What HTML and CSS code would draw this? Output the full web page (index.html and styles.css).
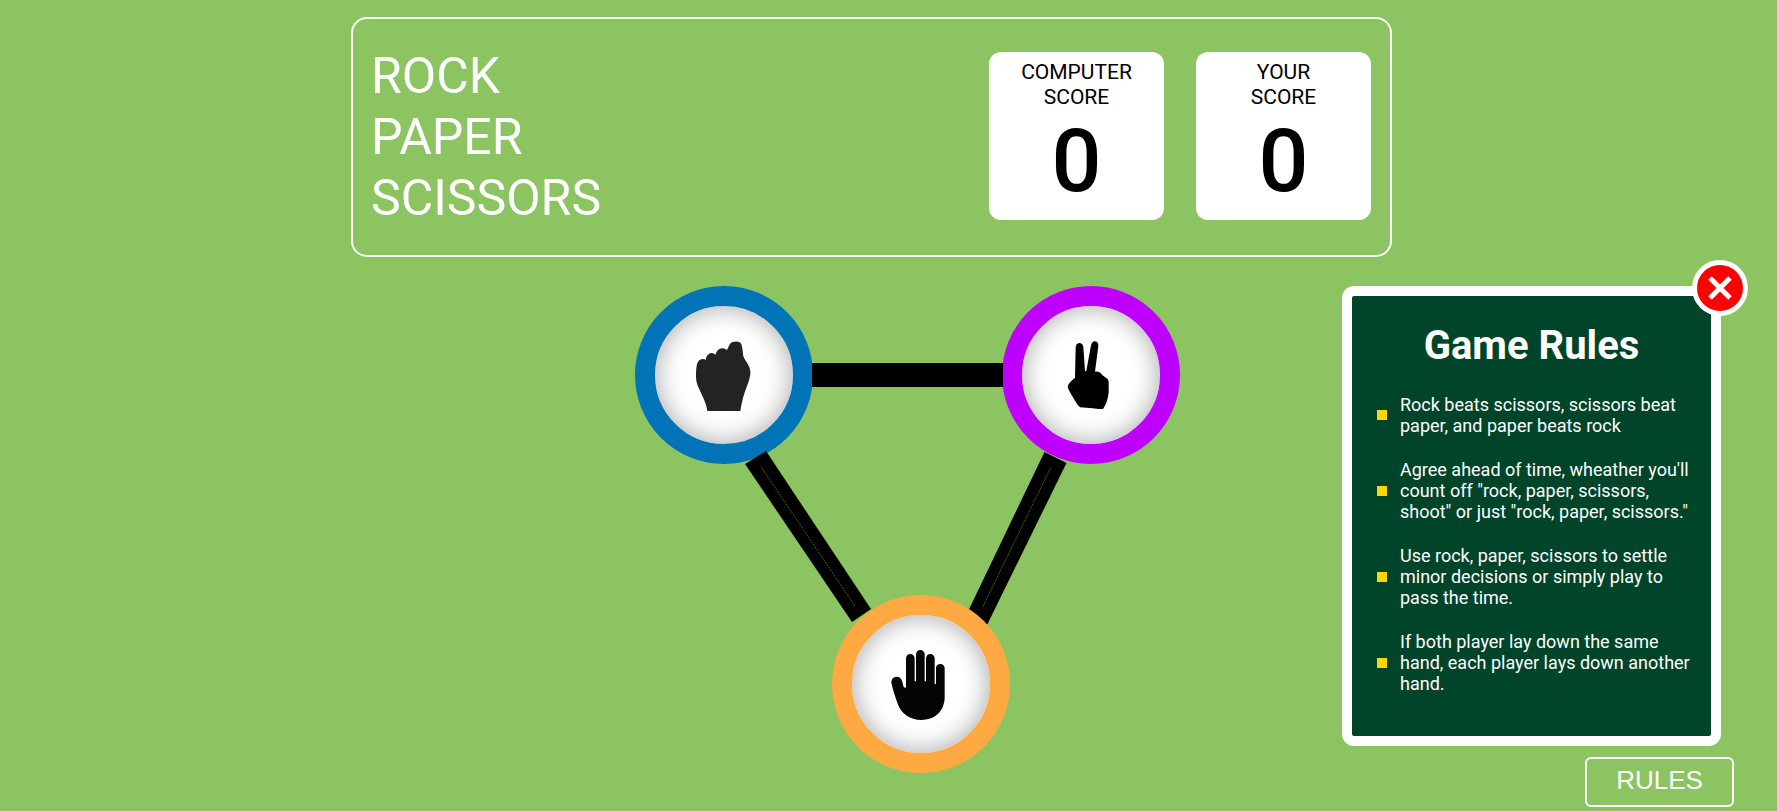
FILE: index.html
```html
<!DOCTYPE html>
<html lang="en">
<head>
<meta charset="utf-8">
<meta name="viewport" content="width=device-width, initial-scale=1">
<title>Rock Paper Scissors</title>
<link rel="stylesheet" href="styles.css">
</head>
<body>
<header class="scoreboard">
  <h1 class="title">ROCK<br>PAPER<br>SCISSORS</h1>
  <div class="scores">
    <section class="score">
      <h2 class="score-label">COMPUTER<br>SCORE</h2>
      <p class="score-value">0</p>
    </section>
    <section class="score">
      <h2 class="score-label">YOUR<br>SCORE</h2>
      <p class="score-value">0</p>
    </section>
  </div>
</header>
<main class="game">
  <div class="arena">
    <button class="hand hand-rock" type="button" aria-label="Rock">
      <svg class="hand-icon" viewBox="12 -3 240 300" aria-hidden="true"><path fill="#242321" d="M82 255C79 232 68 212 58 190C50 174 47 160 48 143C49 125 50 109 58 103Q67 96 77 101Q80 83 94 81Q101 80 106 86Q114 66 127 67Q136 68 141 72C148 58 150 46 164 47Q180 45 184 55C188 66 188 78 190 91C197 110 214 121 211 145C208 168 196 190 190 212C186 228 183 240 181 255Z"/></svg>
    </button>
    <button class="hand hand-scissors" type="button" aria-label="Scissors">
      <svg class="hand-icon" viewBox="3 -3 240 300" aria-hidden="true"><path fill="#000" d="M90 244C80 235 72 218 63 204Q56 193 53 182Q54 174 64 165L75 155L77 64Q78 52 88 51Q97 51 100 62L105 136L109 135L123 58Q126 46 135 46Q146 48 145 60L135 137Q145 136 152 141Q156 149 165 153Q175 158 176 166V200C174 219 168 236 159 249Q140 250 129 247Z"/></svg>
    </button>
    <svg class="links" viewBox="0 0 545 488" aria-hidden="true">
      <rect x="177" y="77" width="191" height="24"/>
      <path d="M110 178L131 165L236 323L217 336Z"/>
      <path d="M409.500 166L431.500 177L352.500 338L326 340Z"/>
      <path class="seam" d="M126.500 181.500L220 320M415.500 182L347.500 321.500"/>
    </svg>
    <button class="hand hand-paper" type="button" aria-label="Paper">
      <svg class="hand-icon" viewBox="3 -6 240 300" aria-hidden="true"><path fill="#050505" d="M78 154V66Q80 54 91 54Q102 55 104 66V136H108V54Q110 42 121 42Q132 43 134 54V136H138V66Q140 54 151 54Q162 55 164 66V144H168V94Q171 84 181 84Q192 85 194 95V187C192 228 163 252 124 252C91 251 63 233 53 203C46 182 38 160 34 140Q34 124 48 122Q61 121 66 134L71 153Q75 157 78 154Z"/></svg>
    </button>
  </div>
  <aside class="side">
    <section class="rules">
      <button class="close" type="button" aria-label="Close rules">
        <svg class="close-icon" viewBox="0 0 24 24" aria-hidden="true"><path d="M2 2L22 22M22 2L2 22" stroke="#fff" stroke-width="5"/></svg>
      </button>
      <h2 class="rules-title">Game Rules</h2>
      <ul class="rules-list">
        <li class="rule">Rock beats scissors, scissors beat paper, and paper beats rock</li>
        <li class="rule">Agree ahead of time, wheather you'll count off "rock, paper, scissors, shoot" or just "rock, paper, scissors."</li>
        <li class="rule">Use rock, paper, scissors to settle minor decisions or simply play to pass the time.</li>
        <li class="rule">If both player lay down the same hand, each player lays down another hand.</li>
      </ul>
    </section>
    <button class="rules-button" type="button">RULES</button>
  </aside>
</main>
</body>
</html>
```

FILE: styles.css
```css
* {
  box-sizing: border-box;
  margin: 0;
  padding: 0;
}

body {
  background: #8bc460;
  color: #fff;
  font-family: Roboto, "Liberation Sans", sans-serif;
  padding: 17px 38px 0 4px;
}

.scoreboard {
  display: flex;
  align-items: center;
  justify-content: space-between;
  width: 60%;
  margin: 0 auto;
  padding: 27px 19px 26px 18px;
  border: 2px solid #fff;
  border-radius: 16px;
}

.title {
  font-size: 50px;
  font-weight: 400;
  line-height: 61px;
}

.scores {
  display: flex;
  gap: 32px;
  margin-bottom: 4px;
}

.score {
  width: 175px;
  padding: 8px 0;
  border-radius: 12px;
  background: #fff;
  color: #000;
  text-align: center;
}

.score-label {
  font-size: 21px;
  font-weight: 400;
  line-height: 25px;
}

.score-value {
  font-size: 88px;
  font-weight: 500;
  line-height: 102px;
}

.game {
  display: grid;
  grid-template-columns: 1fr 545px 1fr;
  align-items: start;
  margin: 29px -38px 0 -4px;
  padding: 0 43px 0 81px;
}

.arena {
  grid-column: 2;
  position: relative;
  height: 488px;
}

.hand {
  position: absolute;
  display: grid;
  place-items: center;
  width: 178px;
  height: 178px;
  border: 20px solid;
  border-radius: 50%;
  background: #fff;
  box-shadow: inset 0 0 26px rgba(0, 0, 0, 0.36);
  cursor: pointer;
}

.hand-rock {
  top: 0;
  left: 0;
  border-color: #0074b6;
}

.hand-scissors {
  top: 0;
  right: 0;
  border-color: #bd00ff;
}

.hand-paper {
  top: 309px;
  left: 197px;
  border-color: #ffa943;
}

.hand-icon {
  width: 80px;
  height: 100px;
}

.links {
  position: absolute;
  inset: 0;
  width: 545px;
  height: 488px;
  pointer-events: none;
}

.seam {
  stroke: #5c803f;
  stroke-width: 1;
  stroke-dasharray: 1 1;
}

.side {
  grid-column: 3;
  display: flex;
  flex-direction: column;
  align-items: flex-end;
  gap: 11px;
}

.rules {
  position: relative;
  width: 379px;
  margin-right: 13px;
  padding: 25px 15px 42px 25px;
  border: 10px solid #fff;
  border-radius: 12px;
  background: #004429;
}

.close {
  position: absolute;
  top: -36px;
  right: -37px;
  display: grid;
  place-items: center;
  width: 56px;
  height: 56px;
  border: 5px solid #fff;
  border-radius: 50%;
  background: #f00;
  cursor: pointer;
}

.close-icon {
  width: 24px;
  height: 24px;
}

.rules-title {
  margin-right: 10px;
  font-size: 40px;
  font-weight: 700;
  line-height: 49px;
  text-align: center;
}

.rules-list {
  display: grid;
  gap: 23px;
  margin-top: 24px;
  list-style: none;
}

.rule {
  display: flex;
  align-items: center;
  gap: 13px;
  font-size: 18px;
  line-height: 21px;
}

.rule::before {
  content: "";
  flex: none;
  width: 10px;
  height: 10px;
  background: #ffd700;
}

.rules-button {
  width: 149px;
  height: 50px;
  padding-bottom: 4px;
  border: 2px solid #fff;
  border-radius: 6px;
  background: transparent;
  color: #fff;
  font: 26px "Liberation Sans", Arial, sans-serif;
  cursor: pointer;
}
```
